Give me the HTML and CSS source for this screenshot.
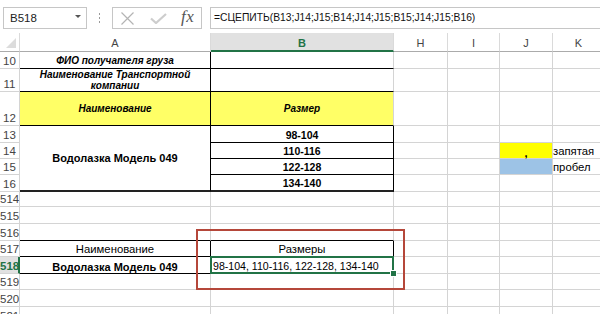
FILE: index.html
```html
<!DOCTYPE html>
<html lang="ru">
<head>
<meta charset="utf-8">
<link rel="stylesheet" href="styles.css">
</head>
<body>
<div class="fbar">
  <div class="namebox"><span class="nb-text">B518</span><span class="nb-arrow"></span></div>
  <div class="grip"><i></i><i></i><i></i></div>
  <div class="fxbox">
    <svg class="ic-x" width="15" height="13" viewBox="0 0 15 13"><path d="M1.5 0.5L13.5 12.5M13.5 0.5L1.5 12.5" stroke="#b4b4b4" stroke-width="1.2" fill="none"/></svg>
    <svg class="ic-ok" width="17" height="11" viewBox="0 0 17 11"><path d="M1 5.5L6 10L16 1" stroke="#cdcdcd" stroke-width="2.2" fill="none"/></svg>
    <span class="fx">fx</span>
  </div>
  <div class="formula">=СЦЕПИТЬ(B13;J14;J15;B14;J14;J15;B15;J14;J15;B16)</div>
</div>
<div class="sheetwrap">
<table class="sheet">
  <colgroup>
    <col class="c-rh"><col class="c-a"><col class="c-b"><col class="c-h"><col class="c-i"><col class="c-j"><col class="c-k">
  </colgroup>
  <tr class="hdr">
    <th class="corner"><span class="tri"></span></th><th>A</th><th class="csel">B</th><th>H</th><th>I</th><th>J</th><th>K</th>
  </tr>
  <tr class="h17">
    <th>10</th><td class="bi rb bb">ФИО получателя груза</td><td class="bb"></td><td></td><td></td><td></td><td></td>
  </tr>
  <tr class="h23">
    <th>11</th><td class="bi wrap rb bb">Наименование Транспортной компании</td><td class="bb"></td><td></td><td></td><td></td><td></td>
  </tr>
  <tr class="h34">
    <th>12</th><td class="bi mid yel rb bb">Наименование</td><td class="bi mid yel bb">Размер</td><td></td><td></td><td></td><td></td>
  </tr>
  <tr class="h17">
    <th>13</th><td rowspan="4" class="bold mid big rb bb2">Водолазка Модель 049</td><td class="bold num rb bb">98-104</td><td></td><td></td><td></td><td></td>
  </tr>
  <tr class="h16">
    <th>14</th><td class="bold num rb bb">110-116</td><td></td><td></td><td class="yel2 comma">,</td><td class="plain">запятая</td>
  </tr>
  <tr class="h16">
    <th>15</th><td class="bold num rb bb">122-128</td><td></td><td></td><td class="blue"></td><td class="plain">пробел</td>
  </tr>
  <tr class="h17">
    <th>16</th><td class="bold num rb bb2">134-140</td><td></td><td></td><td></td><td></td>
  </tr>
  <tr class="h15">
    <th>514</th><td></td><td></td><td></td><td></td><td></td><td></td>
  </tr>
  <tr class="h17">
    <th>515</th><td></td><td></td><td></td><td></td><td></td><td></td>
  </tr>
  <tr class="h17">
    <th>516</th><td class="bb"></td><td class="bb"></td><td></td><td></td><td></td><td></td>
  </tr>
  <tr class="h16">
    <th>517</th><td class="plain ctr rb bb">Наименование</td><td class="plain ctr rb bb">Размеры</td><td></td><td></td><td></td><td></td>
  </tr>
  <tr class="h17">
    <th class="rsel">518</th><td class="bold big ctr bb">Водолазка Модель 049</td><td class="plain left active">98-104, 110-116, 122-128, 134-140<span class="selbox"></span><span class="handle"></span></td><td></td><td></td><td></td><td></td>
  </tr>
  <tr class="h16">
    <th>519</th><td></td><td></td><td></td><td></td><td></td><td></td>
  </tr>
  <tr class="h17">
    <th>520</th><td></td><td></td><td></td><td></td><td></td><td></td>
  </tr>
  <tr class="h17">
    <th>521</th><td></td><td></td><td></td><td></td><td></td><td></td>
  </tr>
</table>
<div class="redbox"></div>
</div>
</body>
</html>
```
FILE: styles.css
```css
html, body {
  margin: 0;
  padding: 0;
  background: #ffffff;
}
body {
  width: 600px;
  height: 314px;
  overflow: hidden;
  font-family: "Liberation Sans", Arial, sans-serif;
  color: #000;
}
.fbar {
  height: 33px;
  box-sizing: border-box;
  padding-top: 7px;
  display: flex;
  align-items: flex-start;
}
.namebox {
  margin-left: 3px;
  width: 84px;
  height: 22px;
  box-sizing: border-box;
  border: 1px solid #c6c6c6;
  display: flex;
  align-items: center;
  justify-content: space-between;
  padding: 0 5px 0 6px;
  font-size: 11.5px;
  color: #222;
}
.nb-arrow {
  width: 0;
  height: 0;
  border-left: 3px solid transparent;
  border-right: 3px solid transparent;
  border-top: 3px solid #555;
  margin-top: -3px;
}
.grip {
  width: 25px;
  height: 22px;
  display: flex;
  flex-direction: column;
  align-items: center;
  justify-content: center;
  gap: 2px;
}
.grip i {
  display: block;
  width: 1px;
  height: 2px;
  background: #9a9a9a;
}
.fxbox {
  width: 90px;
  height: 22px;
  box-sizing: border-box;
  border: 1px solid #c6c6c6;
  display: flex;
  align-items: center;
  padding-left: 7px;
}
.ic-x { margin-right: 15px; }
.ic-ok { margin-right: 14px; margin-top: 1px; }
.fx {
  font-family: "Liberation Serif", "Times New Roman", serif;
  font-style: italic;
  font-size: 17px;
  color: #555;
  margin-top: -2px;
  letter-spacing: 0.5px;
}
.formula {
  margin-left: 8px;
  flex: 1;
  height: 22px;
  box-sizing: border-box;
  border: 1px solid #c6c6c6;
  border-right: none;
  padding-left: 3px;
  font-size: 10.3px;
  line-height: 20px;
  color: #111;
  white-space: nowrap;
  overflow: hidden;
}
.sheetwrap {
  position: relative;
  width: 600px;
  overflow: hidden;
}
.sheet {
  border-collapse: separate;
  border-spacing: 0;
  table-layout: fixed;
  width: 605px;
  font-size: 11px;
}
.c-rh { width: 20px; }
.c-a { width: 191px; }
.c-b { width: 183px; }
.c-h { width: 54px; }
.c-i { width: 52px; }
.c-j { width: 53px; }
.c-k { width: 52px; }
.sheet th, .sheet td {
  box-sizing: border-box;
  padding: 0;
  border-right: 1px solid #d4d4d4;
  border-bottom: 1px solid #d4d4d4;
  vertical-align: bottom;
  white-space: nowrap;
  overflow: visible;
}
.sheet th {
  font-weight: normal;
  color: #444;
  font-size: 11.5px;
  text-align: center;
  line-height: 14px;
}
.hdr { height: 19px; }
.hdr th {
  vertical-align: bottom;
  padding-bottom: 1px;
  border-bottom: 1px solid #ababab;
  border-right: 1px solid #dadada;
  font-size: 11px;
}
.hdr .csel {
  background: #e1e1e1;
  color: #217346;
  font-weight: bold;
  border-bottom: 2px solid #217346;
  padding-bottom: 0;
}
.corner {
  position: relative;
}
.tri {
  position: absolute;
  right: 3px;
  bottom: 3px;
  width: 0;
  height: 0;
  border-left: 10px solid transparent;
  border-bottom: 10px solid #dcdcdc;
}
.rsel {
  color: #217346 !important;
  font-weight: bold !important;
  background: #e1e1e1;
  border-right: 2px solid #217346 !important;
}
.h15 { height: 15px; }
.h16 { height: 16px; }
.h17 { height: 17px; }
.h23 { height: 23px; }
.h34 { height: 34px; }
.rb { border-right-color: #000 !important; }
.bb { border-bottom-color: #000 !important; }
.bb2 { border-bottom: 2px solid #222 !important; }
.bi {
  font-weight: bold;
  font-style: italic;
  font-size: 10px;
  text-align: center;
  line-height: 14px;
}
.wrap {
  white-space: normal !important;
  line-height: 11px;
  vertical-align: middle !important;
}
.mid { vertical-align: middle !important; }
.bold {
  font-weight: bold;
  text-align: center;
}
.big { font-size: 11px; }
.num { font-size: 10.5px; line-height: 14px; }
.yel { background: #ffff66; }
.yel2 { background: #ffff00; text-align: center; font-weight: bold; }
.blue { background: #9dc3e6; }
.comma { line-height: 10px; }
.plain {
  font-size: 11.3px;
  line-height: 14px;
}
.ctr { text-align: center; }
.left { text-align: left; padding-left: 2px !important; font-size: 10.6px; }
.active {
  position: relative;
}
.selbox {
  position: absolute;
  left: -1px;
  top: -1px;
  right: -1px;
  bottom: -1px;
  border: 2px solid #217346;
}
.handle {
  position: absolute;
  right: -4px;
  bottom: -4px;
  width: 5px;
  height: 5px;
  background: #217346;
  border: 1px solid #fff;
}
.redbox {
  position: absolute;
  left: 196px;
  top: 196px;
  width: 209px;
  height: 61px;
  box-sizing: border-box;
  border: 2px solid #b5473a;
}
```
